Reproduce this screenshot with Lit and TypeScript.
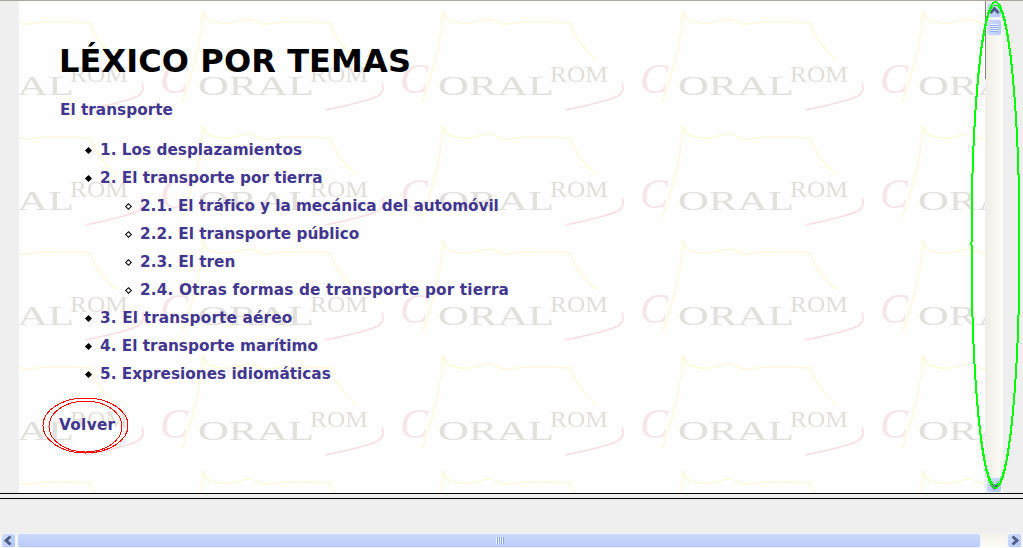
import { LitElement, html, css, svg } from "lit";
import { customElement } from "lit/decorators.js";

const chevron = (d: string) => svg`<svg class="chev" width="15" height="15" viewBox="0 0 15 15"><path d=${d} fill="none" stroke="#4a5c84" stroke-width="2.8"/></svg>`;

@customElement("app-root")
export class AppRoot extends LitElement {
  static styles = css`
    :host { display: block; width: 1023px; height: 548px; overflow: hidden; background: #efefef; position: relative; font-family: "DejaVu Sans", Verdana, sans-serif; }
    .main { display: grid; grid-template-columns: 19px 966px 1px 17px 20px; height: 492px; border-top: 1px solid #aca899; box-sizing: content-box; }
    .content { position: relative; background: #fefefe; overflow: hidden; }
    .wm { position: absolute; inset: 0; width: 100%; height: 100%; filter: blur(0.45px); }
    .wm text { font-family: "Liberation Serif", serif; }
    .flow { position: relative; padding: 43px 0 0 40px; color: #42368f; font-weight: 700; font-size: 15.3px; line-height: 28px; }
    h1 { margin: 0; color: #000; font-size: 32px; line-height: 34px; font-weight: 700; letter-spacing: 0.1px; }
    .sub { margin: 18px 0 0 1px; height: 40px; line-height: 28px; }
    ul { margin: 0; padding: 0 0 0 40px; list-style: none; }
    .flow > ul { padding-left: 41px; }
    li { position: relative; }
    li::before { content: ""; position: absolute; left: -14.5px; top: 12px; width: 5px; height: 5px; background: #000; transform: rotate(45deg); }
    ul ul li::before { box-sizing: border-box; background: #fff; border: 1px solid #000; }
    .tighter { letter-spacing: -0.07px; }
    .wider { letter-spacing: 0.15px; }
    .back { margin-top: 23px; line-height: 28px; letter-spacing: 0.3px; }
    .line div { height: 78px; background: #85857f; }
    .vbar { display: flex; flex-direction: column; background: linear-gradient(90deg, #f0eee6, #fdfdf8); }
    .btn { box-sizing: border-box; width: 16px; height: 16px; border: 1px solid #f2f5ff; border-radius: 3px; background: linear-gradient(135deg, #d2defc, #b2c5f6); display: flex; align-items: center; justify-content: center; flex: none; }
    .vbar .btn { margin: 1px 0 0 0; }
    .vbar .thumb { box-sizing: border-box; width: 16px; height: 17px; margin-top: 1px; border: 1px solid #eef3ff; border-radius: 3px; background: linear-gradient(90deg, #cfdcfc, #b8caf7); display: flex; flex-direction: column; gap: 1px; align-items: center; justify-content: center; flex: none; }
    .vbar .thumb i { display: block; width: 8px; height: 1px; background: #eef4ff; box-shadow: 0 1px 0 #8ea8e4; }
    .spacer { flex: 1; }
    .rule { height: 1px; background: #000; }
    .gap { height: 4px; background: #efefef; }
    .fill { height: 34px; }
    .hbar { display: flex; height: 15px; background: linear-gradient(#f3f1ea, #fdfdf8); padding-left: 1px; }
    .hbar .btn { width: 15px; height: 15px; }
    .hbar .btn.right { margin-left: auto; margin-right: 1px; }
    .hthumb { box-sizing: border-box; width: 964px; height: 15px; margin-left: 1px; border: 1px solid #eef3ff; border-radius: 3px; background: linear-gradient(#cbd9fc, #b9cbf8); display: flex; align-items: center; justify-content: center; gap: 1px; }
    .hthumb i { display: block; width: 1px; height: 7px; background: #eef4ff; box-shadow: 1px 0 0 #8ea8e4; }
    .overlay { position: absolute; left: 0; top: 0; width: 1023px; height: 548px; pointer-events: none; }
    .chev { display: block; flex: none; margin: -1px; }
  `;

  render() {
    return html`
      <div class="main">
        <div></div>
        <div class="content">
          <svg class="wm" aria-hidden="true">
            <defs>
              <pattern id="tile" patternUnits="userSpaceOnUse" x="381" y="-1" width="240" height="115">
                <path d="M43 10 C45 20 50 22 62 23 C72 25 80 19 90 19 C96 19 98 24 104 24 C112 24 120 20 170 23 C174 35 182 48 197 60 M43 10 C42 40 32 75 22 103" fill="none" stroke="#fcf9dc" stroke-width="1.6"/>
                <path d="M165 110 C185 106 205 102 218 96 C224 92 224 86 222 82" fill="none" stroke="#f7dfe3" stroke-width="1.6"/>
                <text x="0" y="93" font-size="42" font-style="italic" fill="#f6e6ea">C</text>
                <text x="38" y="95" font-size="27" fill="#e2e0dd" textLength="116" lengthAdjust="spacingAndGlyphs">ORAL</text>
                <text x="150" y="82" font-size="24" fill="#e2dfda" textLength="58" lengthAdjust="spacingAndGlyphs">ROM</text>
              </pattern>
            </defs>
            <rect width="100%" height="100%" fill="url(#tile)"/>
          </svg>
          <div class="flow">
            <h1>LÉXICO POR TEMAS</h1>
            <p class="sub">El transporte</p>
            <ul>
              <li>1. Los desplazamientos</li>
              <li>2. El transporte por tierra
                <ul>
                  <li class="tighter">2.1. El tráfico y la mecánica del automóvil</li>
                  <li>2.2. El transporte público</li>
                  <li>2.3. El tren</li>
                  <li class="wider">2.4. Otras formas de transporte por tierra</li>
                </ul>
              </li>
              <li class="wider">3. El transporte aéreo</li>
              <li>4. El transporte marítimo</li>
              <li>5. Expresiones idiomáticas</li>
            </ul>
            <div class="back">Volver</div>
          </div>
        </div>
        <div class="line"><div></div></div>
        <div class="vbar">
          <div class="btn">${chevron("M3.5 10 L7.5 5.5 L11.5 10")}</div>
          <div class="thumb"><i></i><i></i><i></i><i></i></div>
          <div class="spacer"></div>
          <div class="btn">${chevron("M3.5 5.5 L7.5 10 L11.5 5.5")}</div>
        </div>
        <div></div>
      </div>
      <div class="rule"></div>
      <div class="gap"></div>
      <div class="rule"></div>
      <div class="fill"></div>
      <div class="hbar">
        <div class="btn">${chevron("M9.5 3.5 L5 7.5 L9.5 11.5")}</div>
        <div class="hthumb"><i></i><i></i><i></i><i></i></div>
        <div class="btn right">${chevron("M5.5 3.5 L10 7.5 L5.5 11.5")}</div>
      </div>
      <svg class="overlay" aria-hidden="true" shape-rendering="crispEdges" fill="none">
        <ellipse cx="995.5" cy="245" rx="24" ry="243" stroke="#00ff00" stroke-width="2"/>
        <ellipse cx="995.5" cy="245" rx="23.5" ry="240" stroke="#00ff00" stroke-width="1"/>
        <ellipse cx="85.5" cy="425.5" rx="42.5" ry="27.5" stroke="#ff0000"/>
        <ellipse cx="85.5" cy="426.5" rx="36.5" ry="25.5" stroke="#ff0000"/>
      </svg>
    `;
  }
}
